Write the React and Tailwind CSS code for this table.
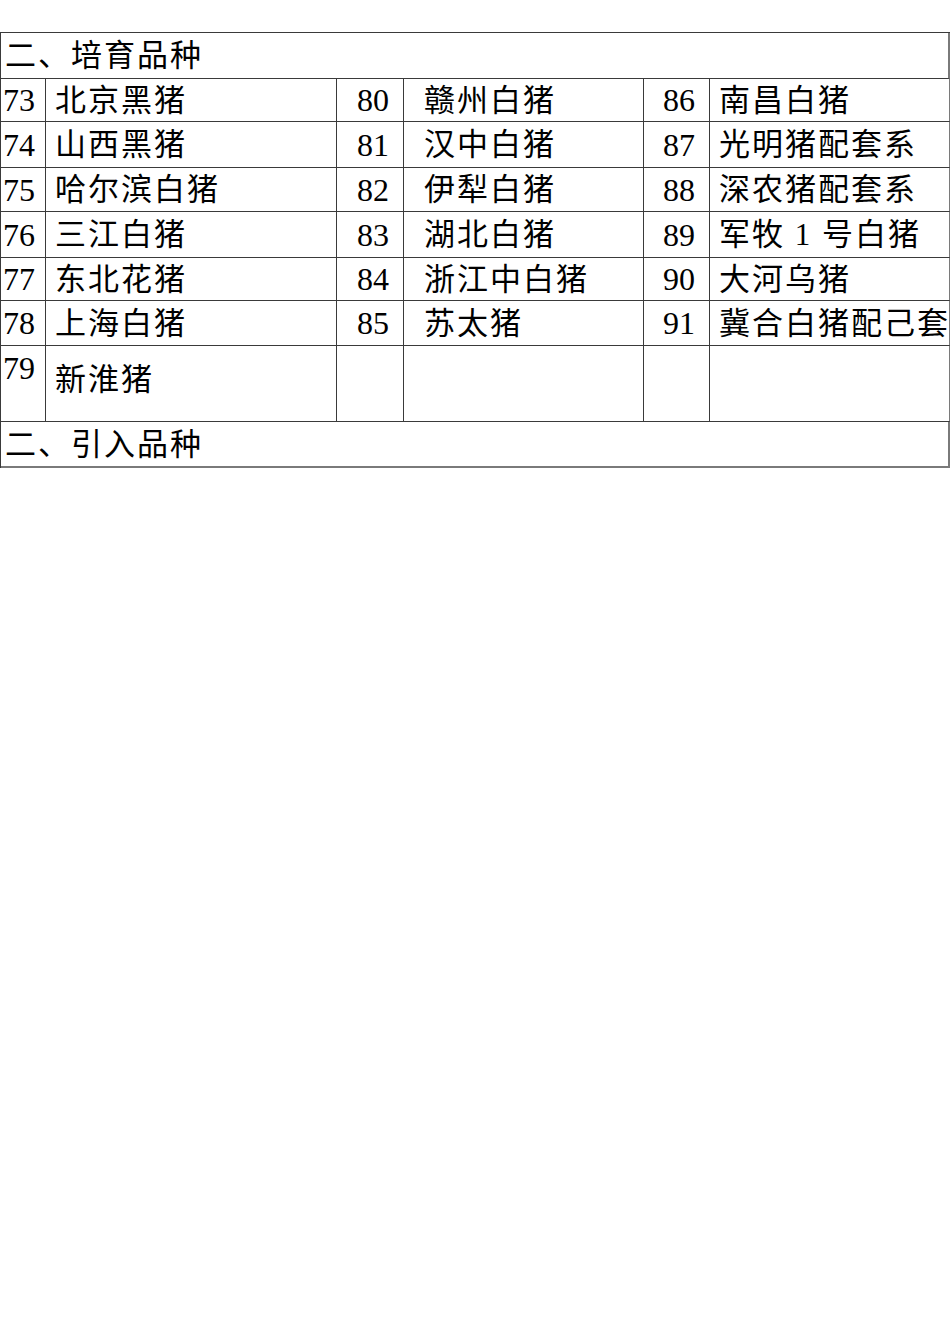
import React from "react";

const rows = [
  { h: "h-[43px]", cells: [["73", "北京黑猪"], ["80", "赣州白猪"], ["86", "南昌白猪"]] },
  { h: "h-[46px]", cells: [["74", "山西黑猪"], ["81", "汉中白猪"], ["87", "光明猪配套系"]] },
  { h: "h-[44px]", cells: [["75", "哈尔滨白猪"], ["82", "伊犁白猪"], ["88", "深农猪配套系"]] },
  { h: "h-[46px]", cells: [["76", "三江白猪"], ["83", "湖北白猪"], ["89", "军牧 1 号白猪"]] },
  { h: "h-[43px]", cells: [["77", "东北花猪"], ["84", "浙江中白猪"], ["90", "大河乌猪"]] },
  { h: "h-[45px]", cells: [["78", "上海白猪"], ["85", "苏太猪"], ["91", "冀合白猪配己套"]] },
];

const line = "border-[#3a3a3a]";

function Row({ h, cells }) {
  return (
    <div className={`grid grid-cols-[45px_291px_67px_240px_66px_241px] ${h}`}>
      <div className={`border-r border-b ${line} flex items-center pl-[2px] text-[32px] leading-none`}>{cells[0][0]}</div>
      <div className={`border-r border-b ${line} flex items-center pl-[9px] text-[31px] tracking-[2px] leading-none whitespace-nowrap`}>{cells[0][1]}</div>
      <div className={`border-r border-b ${line} flex items-center justify-end pr-[14px] text-[32px] leading-none`}>{cells[1][0]}</div>
      <div className={`border-r border-b ${line} flex items-center pl-[20px] text-[31px] tracking-[2px] leading-none whitespace-nowrap`}>{cells[1][1]}</div>
      <div className={`border-r border-b ${line} flex items-center justify-end pr-[14px] text-[32px] leading-none`}>{cells[2][0]}</div>
      <div className={`border-r-2 border-r-[#7a7a7a] border-b ${line} flex items-center pl-[9px] text-[31px] tracking-[2px] leading-none whitespace-nowrap overflow-hidden`}>{cells[2][1]}</div>
    </div>
  );
}

export default function App() {
  return (
    <div className="w-[950px] h-[1344px] bg-white text-black font-['Liberation_Serif','Noto_Sans_CJK_SC',serif]">
      <div className="pt-[32px]">
        <div className={`border-t border-l ${line} w-[950px]`}>
          <div className={`h-[46px] border-r-2 border-r-[#7a7a7a] border-b ${line} flex items-center pl-[4px] text-[31px] tracking-[2px] leading-none`}>
            二、培育品种
          </div>
          {rows.map((r, i) => (
            <Row key={i} {...r} />
          ))}
          <div className="grid grid-cols-[45px_291px_67px_240px_66px_241px] h-[76px]">
            <div className={`border-r border-b ${line} flex items-start pt-[6px] pl-[2px] text-[32px] leading-none`}>79</div>
            <div className={`border-r border-b ${line} flex items-center pb-[8px] pl-[9px] text-[31px] tracking-[2px] leading-none`}>新淮猪</div>
            <div className={`border-r border-b ${line}`}></div>
            <div className={`border-r border-b ${line}`}></div>
            <div className={`border-r border-b ${line}`}></div>
            <div className={`border-r-2 border-r-[#7a7a7a] border-b ${line}`}></div>
          </div>
          <div className={`h-[46px] border-r-2 border-r-[#7a7a7a] border-b-2 border-b-[#7a7a7a] flex items-center pl-[4px] text-[31px] tracking-[2px] leading-none`}>
            二、引入品种
          </div>
        </div>
      </div>
    </div>
  );
}
